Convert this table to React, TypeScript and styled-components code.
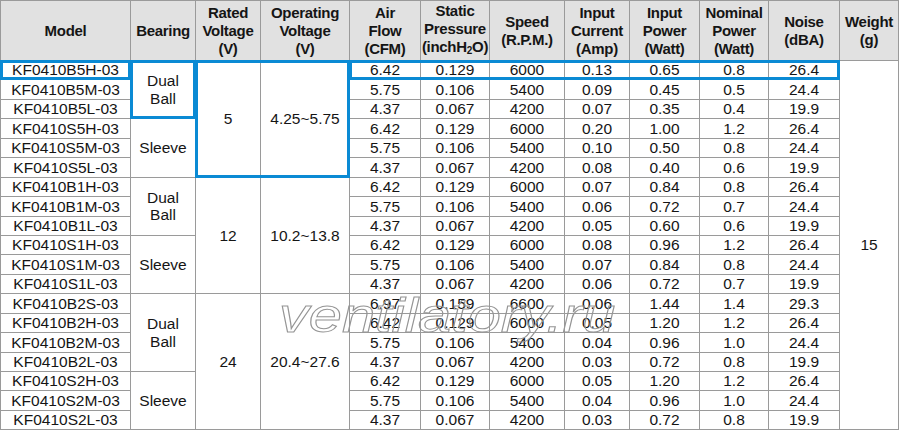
import React from "react";
import styled, { createGlobalStyle } from "styled-components";

const GlobalStyle = createGlobalStyle`
  html, body { margin: 0; padding: 0; background: #ffffff; }
  body { font-family: "Liberation Sans", Arial, Helvetica, sans-serif; }
`;

const Page = styled.div`
  position: relative;
  width: 900px;
  height: 431px;
  overflow: hidden;
  background: #ffffff;
`;

const Grid = styled.div`
  display: inline-grid;
  grid-template-columns: 129px 64px 64px 88px 70px 68px 74px 64px 69px 68px 70px 58px;
  grid-template-rows: 59px repeat(19, 18.45px);
  gap: 1px;
  padding: 1px;
  background: #9a9a9a;
`;

type Place = { $col: number; $row: number; $cs?: number; $rs?: number };

const Cell = styled.div<Place & { $head?: boolean }>`
  grid-column: ${(p) => p.$col} / span ${(p) => p.$cs ?? 1};
  grid-row: ${(p) => p.$row} / span ${(p) => p.$rs ?? 1};
  display: flex;
  align-items: center;
  justify-content: center;
  text-align: center;
  background: ${(p) => (p.$head ? "#e1e1e1" : "#ffffff")};
  color: #151515;
  font-size: ${(p) => (p.$head ? "15px" : "15.5px")};
  font-weight: ${(p) => (p.$head ? 700 : 400)};
  letter-spacing: ${(p) => (p.$head ? "-0.3px" : "0")};
  line-height: ${(p) => (p.$head ? "18px" : "17.5px")};
  white-space: nowrap;
`;

const Highlight = styled.div<Place>`
  grid-column: ${(p) => p.$col} / span ${(p) => p.$cs ?? 1};
  grid-row: ${(p) => p.$row} / span ${(p) => p.$rs ?? 1};
  margin: -1px;
  border: 3px solid #0a8ad4;
  z-index: 2;
  pointer-events: none;
`;

const Sub = styled.span`
  font-size: 10px;
  vertical-align: -2px;
`;

const Watermark = styled.div`
  position: absolute;
  left: 279px;
  top: 291px;
  font-family: "Liberation Sans", Arial, sans-serif;
  font-style: italic;
  font-size: 49px;
  line-height: 1;
  color: transparent;
  -webkit-text-stroke: 1px #959595;
  transform: scaleX(1.215);
  transform-origin: left top;
  white-space: nowrap;
  pointer-events: none;
  z-index: 3;
`;

const headers: React.ReactNode[] = [
  "Model",
  "Bearing",
  <>Rated<br />Voltage<br />(V)</>,
  <>Operating<br />Voltage<br />(V)</>,
  <>Air<br />Flow<br />(CFM)</>,
  <>Static<br />Pressure<br />(inchH<Sub>2</Sub>O)</>,
  <>Speed<br />(R.P.M.)</>,
  <>Input<br />Current<br />(Amp)</>,
  <>Input<br />Power<br />(Watt)</>,
  <>Nominal<br />Power<br />(Watt)</>,
  <>Noise<br />(dBA)</>,
  <>Weight<br />(g)</>,
];

const rows: string[][] = [
  ["KF0410B5H-03", "6.42", "0.129", "6000", "0.13", "0.65", "0.8", "26.4"],
  ["KF0410B5M-03", "5.75", "0.106", "5400", "0.09", "0.45", "0.5", "24.4"],
  ["KF0410B5L-03", "4.37", "0.067", "4200", "0.07", "0.35", "0.4", "19.9"],
  ["KF0410S5H-03", "6.42", "0.129", "6000", "0.20", "1.00", "1.2", "26.4"],
  ["KF0410S5M-03", "5.75", "0.106", "5400", "0.10", "0.50", "0.8", "24.4"],
  ["KF0410S5L-03", "4.37", "0.067", "4200", "0.08", "0.40", "0.6", "19.9"],
  ["KF0410B1H-03", "6.42", "0.129", "6000", "0.07", "0.84", "0.8", "26.4"],
  ["KF0410B1M-03", "5.75", "0.106", "5400", "0.06", "0.72", "0.7", "24.4"],
  ["KF0410B1L-03", "4.37", "0.067", "4200", "0.05", "0.60", "0.6", "19.9"],
  ["KF0410S1H-03", "6.42", "0.129", "6000", "0.08", "0.96", "1.2", "26.4"],
  ["KF0410S1M-03", "5.75", "0.106", "5400", "0.07", "0.84", "0.8", "24.4"],
  ["KF0410S1L-03", "4.37", "0.067", "4200", "0.06", "0.72", "0.7", "19.9"],
  ["KF0410B2S-03", "6.97", "0.159", "6600", "0.06", "1.44", "1.4", "29.3"],
  ["KF0410B2H-03", "6.42", "0.129", "6000", "0.05", "1.20", "1.2", "26.4"],
  ["KF0410B2M-03", "5.75", "0.106", "5400", "0.04", "0.96", "1.0", "24.4"],
  ["KF0410B2L-03", "4.37", "0.067", "4200", "0.03", "0.72", "0.8", "19.9"],
  ["KF0410S2H-03", "6.42", "0.129", "6000", "0.05", "1.20", "1.2", "26.4"],
  ["KF0410S2M-03", "5.75", "0.106", "5400", "0.04", "0.96", "1.0", "24.4"],
  ["KF0410S2L-03", "4.37", "0.067", "4200", "0.03", "0.72", "0.8", "19.9"],
];

const bearings: { start: number; span: number; label: React.ReactNode }[] = [
  { start: 0, span: 3, label: <>Dual<br />Ball</> },
  { start: 3, span: 3, label: "Sleeve" },
  { start: 6, span: 3, label: <>Dual<br />Ball</> },
  { start: 9, span: 3, label: "Sleeve" },
  { start: 12, span: 4, label: <>Dual<br />Ball</> },
  { start: 16, span: 3, label: "Sleeve" },
];

const voltages = [
  { start: 0, span: 6, rated: "5", op: "4.25~5.75" },
  { start: 6, span: 6, rated: "12", op: "10.2~13.8" },
  { start: 12, span: 7, rated: "24", op: "20.4~27.6" },
];

export default function App() {
  return (
    <Page>
      <GlobalStyle />
      <Grid>
        {headers.map((h, i) => (
          <Cell key={`h${i}`} $head $col={i + 1} $row={1}>
            <div>{h}</div>
          </Cell>
        ))}
        {rows.map((r, i) => (
          <React.Fragment key={r[0]}>
            <Cell $col={1} $row={i + 2}>{r[0]}</Cell>
            {r.slice(1).map((v, j) => (
              <Cell key={j} $col={j + 5} $row={i + 2}>{v}</Cell>
            ))}
          </React.Fragment>
        ))}
        {bearings.map((b) => (
          <Cell key={`b${b.start}`} $col={2} $row={b.start + 2} $rs={b.span}>
            <div>{b.label}</div>
          </Cell>
        ))}
        {voltages.map((v) => (
          <React.Fragment key={`v${v.start}`}>
            <Cell $col={3} $row={v.start + 2} $rs={v.span}>{v.rated}</Cell>
            <Cell $col={4} $row={v.start + 2} $rs={v.span}>{v.op}</Cell>
          </React.Fragment>
        ))}
        <Cell $col={12} $row={2} $rs={19}>15</Cell>

        <Highlight $col={1} $row={2} />
        <Highlight $col={2} $row={2} $rs={3} />
        <Highlight $col={3} $row={2} $cs={2} $rs={6} />
        <Highlight $col={5} $row={2} $cs={7} />
      </Grid>
      <Watermark>ventilatory.ru</Watermark>
    </Page>
  );
}
